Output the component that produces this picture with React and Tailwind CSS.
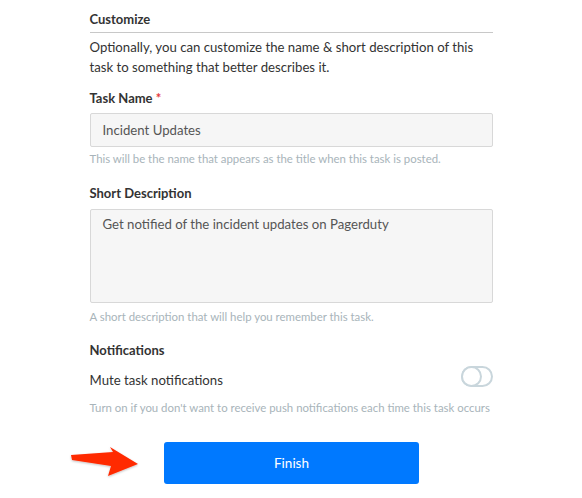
import React, { useState } from "react";

function Toggle() {
  const [on, setOn] = useState(false);
  return (
    <button
      type="button"
      onClick={() => setOn(!on)}
      className="relative w-[32px] h-[21px] rounded-full border-2 border-[#c9d6dc] bg-white shrink-0"
    >
      <span
        className={
          on
            ? "absolute top-[-2px] right-[-2px] w-[21px] h-[21px] rounded-full border-2 border-[#c9d6dc] bg-white"
            : "absolute top-[-2px] left-[-2px] w-[21px] h-[21px] rounded-full border-2 border-[#c9d6dc] bg-white"
        }
      ></span>
    </button>
  );
}

function Arrow() {
  return (
    <svg width="72" height="38" viewBox="0 0 72 38" className="shrink-0">
      <defs>
        <filter id="sh" x="-20%" y="-20%" width="140%" height="160%">
          <feDropShadow dx="0" dy="1" stdDeviation="1" floodColor="#000" floodOpacity="0.25" />
        </filter>
      </defs>
      <path
        d="M3 13 L45 10 L42 5 L70 22 L40 34 L43 24 L4 18 Z"
        fill="#ff2a00"
        filter="url(#sh)"
      />
    </svg>
  );
}

export default function App() {
  const [taskName, setTaskName] = useState("Incident Updates");
  const [desc, setDesc] = useState("Get notified of the incident updates on Pagerduty");

  return (
    <div className="w-[582px] h-[498px] bg-white flex flex-col font-['Lato',sans-serif] text-[#333]">
      <div className="w-[403px] mx-auto flex flex-col pt-[8px]">
        {/* Customize */}
        <div className="border-b border-[#c8c8c8] pb-[3px] leading-[20px]">
          <span className="text-[13px] font-bold text-[#333]">Customize</span>
        </div>
        <p className="text-[13.2px] leading-[20px] mt-[4px] text-[#333]">
          Optionally, you can customize the name &amp; short description of this task to something that better describes it.
        </p>

        {/* Task name */}
        <label className="text-[13px] font-bold mt-[11px] leading-[20px]">
          Task Name <span className="text-[#e5383b]">*</span>
        </label>
        <input
          value={taskName}
          onChange={(e) => setTaskName(e.target.value)}
          className="mt-[5px] h-[34px] w-full bg-[#f6f6f6] border border-[#d8d8d8] rounded-[2px] px-[12px] text-[13.2px] text-[#555] outline-none"
        />
        <p className="text-[11.4px] text-[#a8b4ba] mt-[5px] leading-[14px]">
          This will be the name that appears as the title when this task is posted.
        </p>

        {/* Short description */}
        <label className="text-[13px] font-bold mt-[17px] leading-[20px]">Short Description</label>
        <textarea
          value={desc}
          onChange={(e) => setDesc(e.target.value)}
          className="mt-[6px] h-[94px] w-full bg-[#f6f6f6] border border-[#d8d8d8] rounded-[2px] px-[12px] py-[4px] text-[13.2px] leading-[20px] text-[#555] outline-none resize-none block"
        />
        <p className="text-[11.4px] text-[#a8b4ba] mt-[7px] leading-[14px]">
          A short description that will help you remember this task.
        </p>

        {/* Notifications */}
        <div className="text-[13px] font-bold mt-[16px] leading-[20px]">Notifications</div>
        <div className="flex items-start justify-between mt-[6px]">
          <span className="text-[13.2px] leading-[20px] mt-[4px] text-[#333]">Mute task notifications</span>
          <Toggle />
        </div>
        <p className="text-[11.4px] text-[#a8b4ba] mt-[11px] leading-[14px] whitespace-nowrap">
          Turn on if you don't want to receive push notifications each time this task occurs
        </p>
      </div>

      {/* Finish row */}
      <div className="flex items-start pl-[68px] mt-[27px] gap-[24px]">
        <Arrow />
        <button className="w-[255px] h-[42px] rounded-[3px] bg-[#0079ff] text-white text-[13.5px]">
          Finish
        </button>
      </div>
    </div>
  );
}
